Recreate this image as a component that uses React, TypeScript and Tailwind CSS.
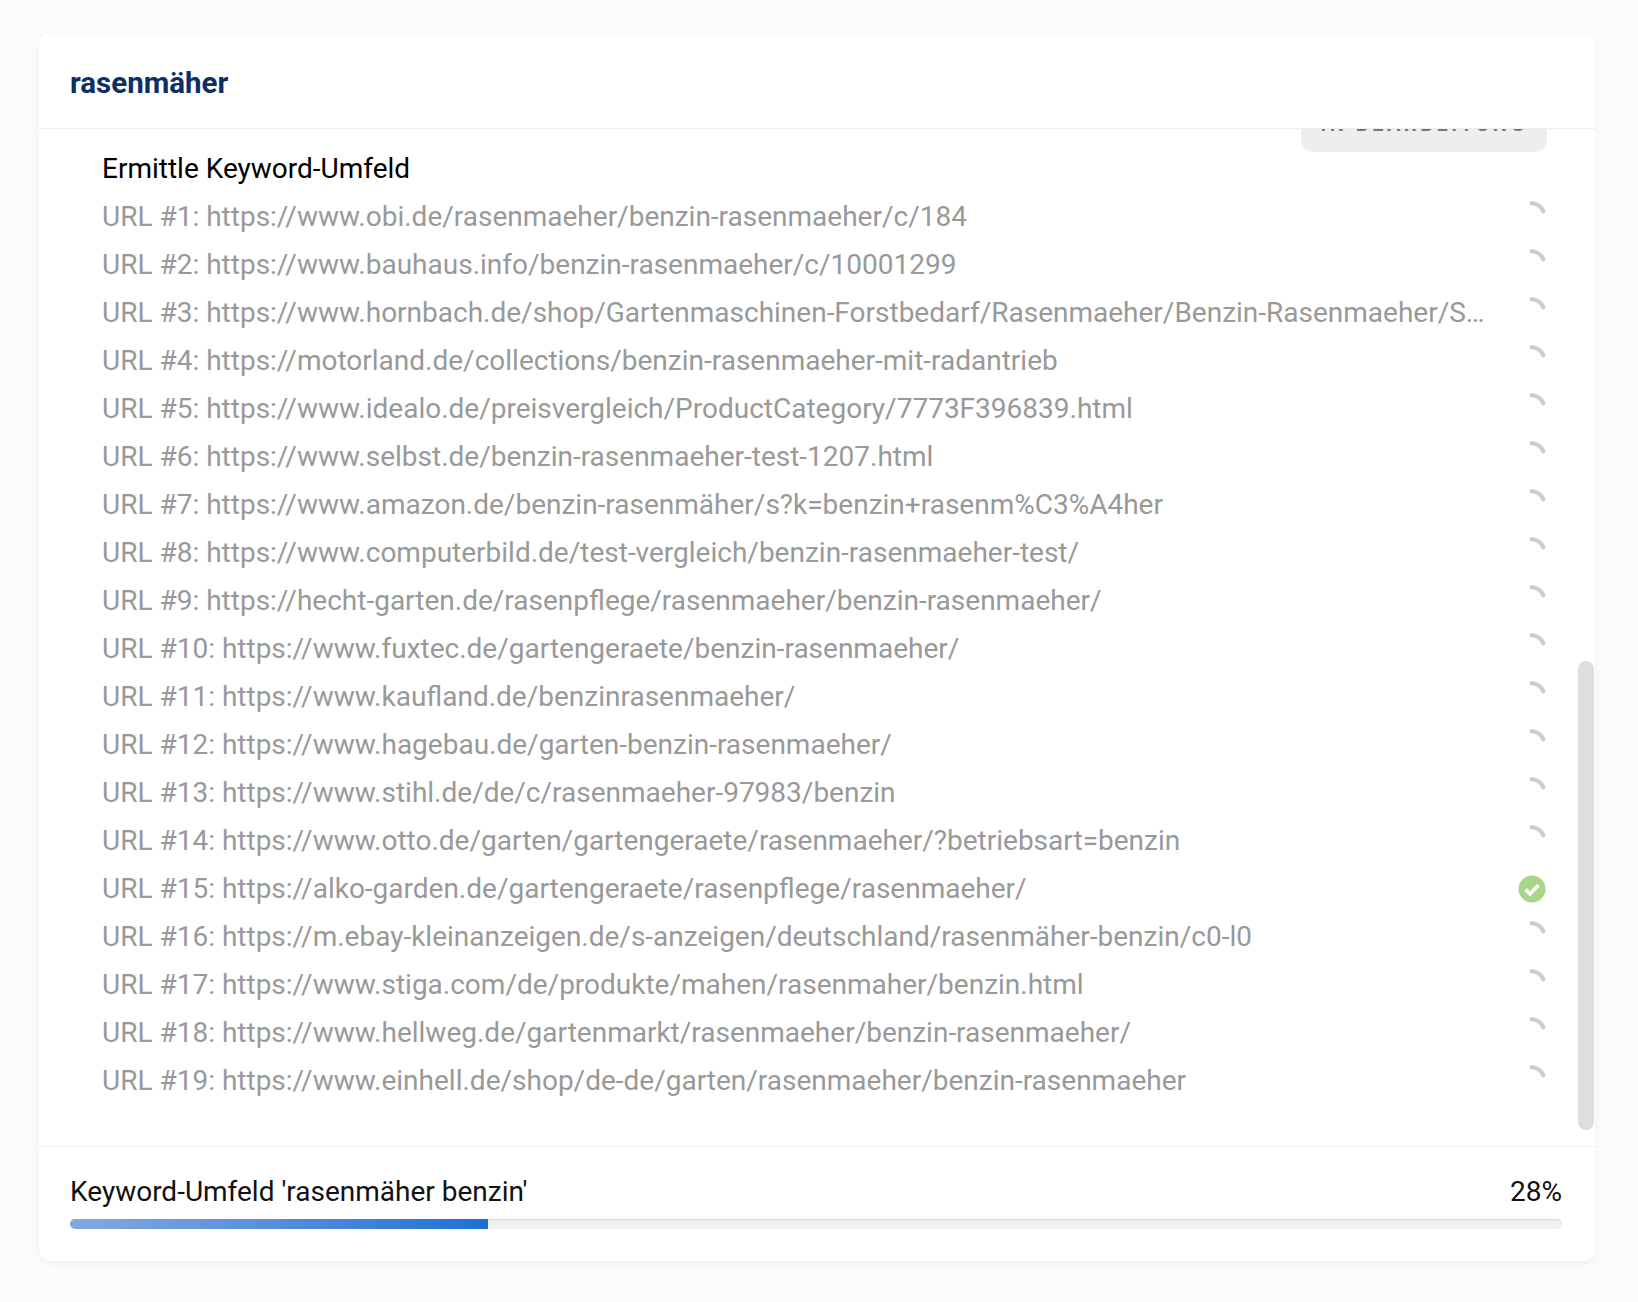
const urls = [
  "https://www.obi.de/rasenmaeher/benzin-rasenmaeher/c/184",
  "https://www.bauhaus.info/benzin-rasenmaeher/c/10001299",
  "https://www.hornbach.de/shop/Gartenmaschinen-Forstbedarf/Rasenmaeher/Benzin-Rasenmaeher/Sortiment/S1234",
  "https://motorland.de/collections/benzin-rasenmaeher-mit-radantrieb",
  "https://www.idealo.de/preisvergleich/ProductCategory/7773F396839.html",
  "https://www.selbst.de/benzin-rasenmaeher-test-1207.html",
  "https://www.amazon.de/benzin-rasenmäher/s?k=benzin+rasenm%C3%A4her",
  "https://www.computerbild.de/test-vergleich/benzin-rasenmaeher-test/",
  "https://hecht-garten.de/rasenpflege/rasenmaeher/benzin-rasenmaeher/",
  "https://www.fuxtec.de/gartengeraete/benzin-rasenmaeher/",
  "https://www.kaufland.de/benzinrasenmaeher/",
  "https://www.hagebau.de/garten-benzin-rasenmaeher/",
  "https://www.stihl.de/de/c/rasenmaeher-97983/benzin",
  "https://www.otto.de/garten/gartengeraete/rasenmaeher/?betriebsart=benzin",
  "https://alko-garden.de/gartengeraete/rasenpflege/rasenmaeher/",
  "https://m.ebay-kleinanzeigen.de/s-anzeigen/deutschland/rasenmäher-benzin/c0-l0",
  "https://www.stiga.com/de/produkte/mahen/rasenmaher/benzin.html",
  "https://www.hellweg.de/gartenmarkt/rasenmaeher/benzin-rasenmaeher/",
  "https://www.einhell.de/shop/de-de/garten/rasenmaeher/benzin-rasenmaeher",
];

function Spinner() {
  return (
    <svg width="28" height="28" viewBox="0 0 28 28" fill="none" className="shrink-0 overflow-visible">
      <path d="M12 0.2 A13.2 13.2 0 0 1 26 10" stroke="#cccccc" strokeWidth="4" />
    </svg>
  );
}

function Done() {
  return (
    <svg width="28" height="28" viewBox="0 0 28 28" fill="none" className="shrink-0">
      <circle cx="14" cy="14" r="13.5" fill="#a8d58c" />
      <path d="M7.5 14.5 L12 19 L20.5 10" stroke="#ffffff" strokeWidth="3.6" />
    </svg>
  );
}

export default function App() {
  return (
    <div className="h-[1302px] overflow-hidden bg-[#fbfbfb] pl-[39px] pr-[43px] pt-[33px] font-['Roboto',sans-serif]">
      <div className="flex h-[1228px] flex-col overflow-hidden rounded-xl bg-white shadow-[0_2px_6px_rgba(0,0,0,0.05)]">
        {/* Kopf */}
        <div className="relative z-10 flex h-[96px] shrink-0 items-center border-b border-[#eeeeee] bg-white pl-[31px] pt-1.5">
          <h1 className="text-[29.5px] font-bold text-[#0b2f66]">rasenmäher</h1>
        </div>

        {/* Liste */}
        <div className="relative min-h-0 flex-1 overflow-hidden">
          <div className="-mt-[31px] flex flex-col">
            <div className="-mb-[7px] mr-[48px] flex h-[54px] w-[246px] items-center justify-center self-end rounded-xl bg-[#eeeeee] pb-0.5 text-[20px] font-bold tracking-[3.5px] text-[#777777]">
              IN BEARBEITUNG
            </div>
            <div className="flex h-12 items-center pl-[63px] text-[28px] text-black">Ermittle Keyword-Umfeld</div>
            {urls.map((url, i) => (
              <div key={url} className="flex h-12 items-center gap-[32px] pl-[63px] pr-[49px] text-[28px] text-[#999999]">
                <span className="min-w-0 flex-1 truncate">
                  URL #{i + 1}: {url}
                </span>
                {i === 14 ? <Done /> : <Spinner />}
              </div>
            ))}
          </div>
          <div className="absolute right-px top-[532px] h-[469px] w-4 rounded-full bg-[#dedede]" />
        </div>

        {/* Fortschritt */}
        <div className="shrink-0 border-t border-[#eeeeee] pb-8 pl-[31px] pr-[33px] pt-[25px]">
          <div className="flex items-center justify-between text-[28px] leading-[40px] text-[#111111]">
            <span>Keyword-Umfeld 'rasenmäher benzin'</span>
            <span>28%</span>
          </div>
          <div className="mt-[7px] h-2.5 overflow-hidden rounded-full bg-[#f0f0f0] shadow-[inset_0_1px_2px_rgba(0,0,0,0.1)]">
            <div className="h-full w-[28%] bg-gradient-to-r from-[#83a9e2] to-[#1871d4]" />
          </div>
        </div>
      </div>
    </div>
  );
}
